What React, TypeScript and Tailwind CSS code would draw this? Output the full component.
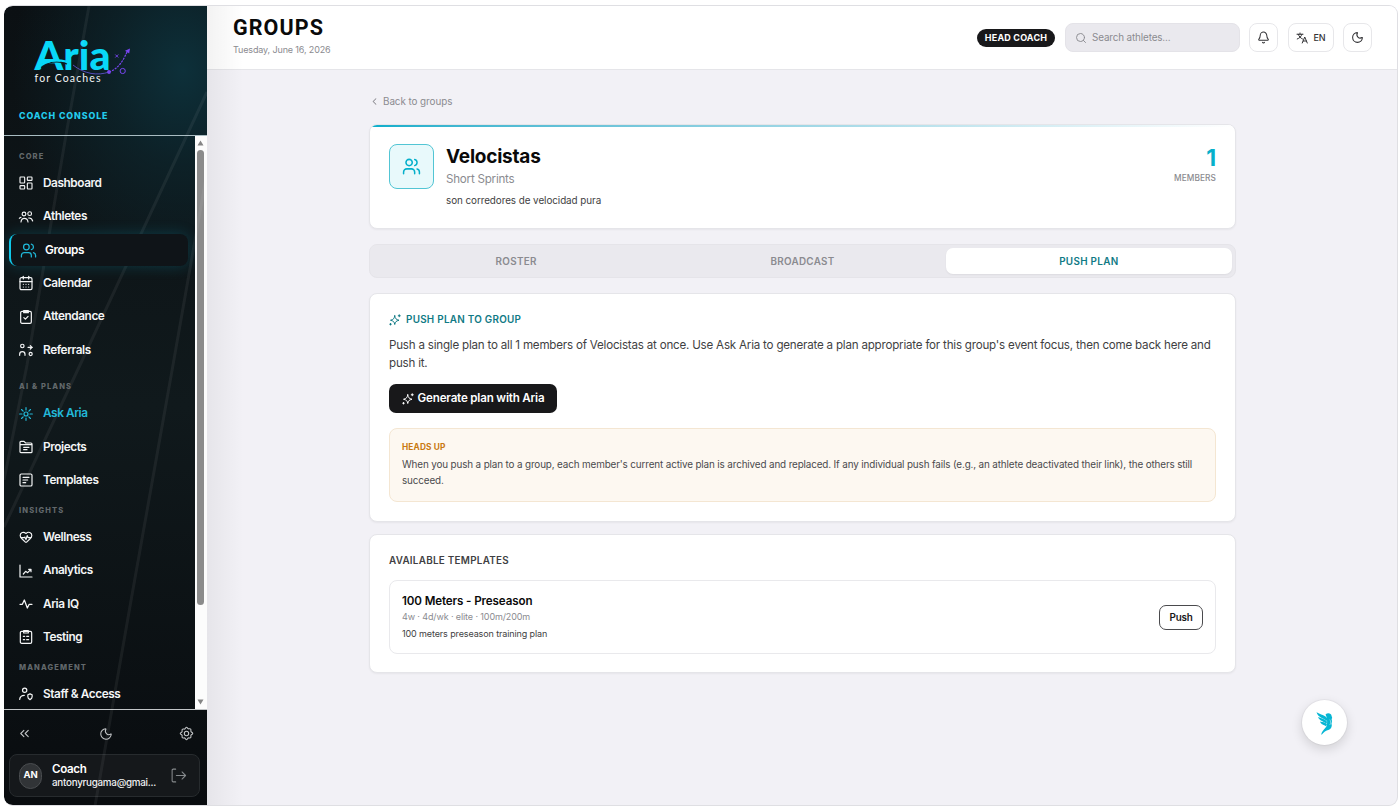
import type { ReactNode } from "react";
import {
  Bell,
  CalendarDays,
  ChevronLeft,
  ChevronsLeft,
  HeartPulse,
  LayoutDashboard,
  Moon,
  Search,
  Users,
} from "lucide-react";

interface NavItem {
  label: string;
  icon: ReactNode;
  tone?: "active" | "accent";
}

interface NavSection {
  title: string;
  gap: string;
  items: NavItem[];
}

function Glyph({ children, size = 16, sw = 1.6 }: { children: ReactNode; size?: number; sw?: number }) {
  return (
    <svg width={size} height={size} viewBox="0 0 24 24" fill="none" stroke="currentColor" strokeWidth={sw} strokeLinecap="round" strokeLinejoin="round">
      {children}
    </svg>
  );
}

const Sparkle = ({ size = 12 }: { size?: number }) => (
  <Glyph size={size} sw={2}>
    <path d="M11.5 3.500c1 6 2.500 7.500 8.500 9-6 1.500-7.500 3-8.500 8.500-1-5.500-2.500-7-8.500-8.500 6-1.500 7.500-3 8.500-9z" />
    <path d="M20.500 1.500v4M18.500 3.500h4M3 19v3M1.500 20.500h3" />
  </Glyph>
);

const LogOutIcon = () => (
  <Glyph size={17} sw={1.5}>
    <path d="M8 3H4.500A1.500 1.500 0 0 0 3 4.500v15A1.500 1.500 0 0 0 4.500 21H8" />
    <path d="M9 12h13M17 7l5 5-5 5" />
  </Glyph>
);

const GearIcon = () => (
  <Glyph size={15} sw={1.7}>
    <path d="M12 2c1.300 0 1.800 2 2.900 2.500s2.800-.6 3.800.4-.1 2.700.4 3.800S22 10.700 22 12s-2.400 1.800-2.900 2.900.6 2.800-.4 3.800-2.700-.1-3.800.4S13.300 22 12 22s-1.800-2.400-2.900-2.900-2.800.6-3.800-.4.1-2.700-.4-3.800S2 13.300 2 12s2.400-1.800 2.900-2.900-.6-2.800.4-3.800 2.700.1 3.800-.4S10.700 2 12 2z" />
    <circle cx="12" cy="12" r="3.500" />
  </Glyph>
);

const SECTIONS: NavSection[] = [
  {
    title: "CORE",
    gap: "mt-[11px]",
    items: [
      { label: "Dashboard", icon: <LayoutDashboard size={16} strokeWidth={1.7} /> },
      {
        label: "Athletes",
        icon: (
          <Glyph sw={1.7}>
            <circle cx="9" cy="7.500" r="2.800" />
            <circle cx="17.500" cy="7" r="2.800" />
            <path d="M4.500 19.500c.4-3.600 2.200-5.500 5-5.500s5.100 2 5.500 5.500M16 13.500c3-.3 5.200 1.500 6 4.500M2 14l2.500-1.500" />
          </Glyph>
        ),
      },
      { label: "Groups", icon: <Users size={17} strokeWidth={1.8} />, tone: "active" },
      { label: "Calendar", icon: <CalendarDays size={16} strokeWidth={1.8} /> },
      {
        label: "Attendance",
        icon: (
          <Glyph sw={1.8}>
            <rect x="4" y="3.500" width="16" height="18" rx="2" />
            <path d="M8.500 2.500h7v3h-7zM8.800 13l2.300 2.300 4-4.300" />
          </Glyph>
        ),
      },
      {
        label: "Referrals",
        icon: (
          <Glyph sw={1.8}>
            <circle cx="6.500" cy="6" r="2.600" />
            <path d="M2.500 20v-1.500c0-2.300 1.500-4 4-4s4 1.700 4 4V20M15 8h6.500M18.500 5.500L21 8l-2.500 2.500" />
            <circle cx="19" cy="18" r="2.300" />
          </Glyph>
        ),
      },
    ],
  },
  {
    title: "AI & PLANS",
    gap: "mt-[10px]",
    items: [
      {
        label: "Ask Aria",
        tone: "accent",
        icon: (
          <Glyph sw={1.8}>
            <circle cx="12" cy="12" r="3" />
            <path d="M12 2.500v3.500M12 18v3.500M2.500 12H6M18 12h3.500M5.300 5.300l2.400 2.400M16.300 16.300l2.400 2.400M5.300 18.700l2.400-2.400M16.300 7.700l2.400-2.400" />
          </Glyph>
        ),
      },
      {
        label: "Projects",
        icon: (
          <Glyph sw={1.8}>
            <path d="M3 19V5a1.500 1.500 0 0 1 1.500-1.500H9L11.500 6H19.500A1.500 1.500 0 0 1 21 7.500V19a1.500 1.500 0 0 1-1.500 1.500h-15A1.500 1.500 0 0 1 3 19zM3 8.500h18M8.500 12.500h8M8.500 16h5" />
          </Glyph>
        ),
      },
      {
        label: "Templates",
        icon: (
          <Glyph sw={1.8}>
            <rect x="3" y="3" width="18" height="18" rx="2" />
            <path d="M7.500 8h9M7.500 12h7M7.500 16h4" />
          </Glyph>
        ),
      },
    ],
  },
  {
    title: "INSIGHTS",
    gap: "mt-[3.5px]",
    items: [
      { label: "Wellness", icon: <HeartPulse size={14} strokeWidth={2} /> },
      {
        label: "Analytics",
        icon: (
          <Glyph sw={1.8}>
            <path d="M3 3v18h18M8 16.500l3.500-4 3 2 4.500-4.500M16 9.500h3.500V13" />
          </Glyph>
        ),
      },
      {
        label: "Aria IQ",
        icon: (
          <Glyph sw={1.9}>
            <path d="M3 12.500h3.500L9.500 6l4.500 12 2.800-5.500H21" />
          </Glyph>
        ),
      },
      {
        label: "Testing",
        icon: (
          <Glyph sw={1.8}>
            <rect x="3.500" y="3.500" width="17" height="18" rx="2" />
            <path d="M8.500 2.500h7v3.500h-7zM8 11h2M13 11h3M8 16h2M13 16h3" />
          </Glyph>
        ),
      },
    ],
  },
  {
    title: "MANAGEMENT",
    gap: "mt-[3.3px]",
    items: [
      {
        label: "Staff & Access",
        icon: (
          <Glyph sw={1.8}>
            <circle cx="10" cy="6.500" r="3.200" />
            <path d="M2.500 20c.5-4 3-6 7-6M18 11.800l3.200 1.300v3.200c0 2-1.200 3.300-3.200 4.200-2-.9-3.200-2.200-3.200-4.200v-3.200z" />
          </Glyph>
        ),
      },
    ],
  },
];

function Logo() {
  return (
    <svg className="mt-[31px] ml-[26px] block overflow-visible" width="106" height="48" viewBox="30 37 106 48" fill="none">
      <text x="34.5" y="70" textLength="76" lengthAdjust="spacingAndGlyphs" className="font-['Lato',sans-serif] text-[39px] font-black" fill="#08d8f8">Aria</text>
      <path d="M41 67.500C49 61.500 58 60.500 67 64" stroke="#0b1c22" strokeWidth="1.300" />
      <path d="M36 69.500C44 61 54 58.500 66 61.500" stroke="#08d8f8" strokeWidth="2.200" />
      <path d="M73 65C84 74 98 76 109 72" stroke="#5b50c9" strokeWidth="0.900" />
      <path d="M109 72C118 69 123 61 127 52" stroke="#7845f0" strokeWidth="1.200" strokeDasharray="2.200 1" />
      <path d="M130 48.500l-5 2.300 4.200 2.800z" fill="#7845f0" />
      <circle cx="109" cy="72" r="1.900" fill="#7845f0" />
      <circle cx="122.700" cy="71" r="2.600" stroke="#7845f0" strokeWidth="1" />
      <path d="M115.300 54.500l3 3M118.300 54.500l-3 3" stroke="#7845f0" strokeWidth="0.900" />
      <text x="34.500" y="81.500" textLength="66" className="font-['Lato',sans-serif] text-[10.5px]" fill="#f2f5f6">for Coaches</text>
    </svg>
  );
}

function Bird() {
  return (
    <svg width="18" height="24" viewBox="0 0 18 24" fill="#06b6d4">
      <path d="M0.500 1.200C4.500 3.800 9.500 3.800 11.700 8L11 10C7 6.700 2.200 6.500 0.500 1.200z" />
      <path d="M2 5.900C6 7.500 9 7.700 11 10.700l-.4 2C8 9.900 3.800 10.500 2 5.900z" />
      <path d="M4 10.400c3.200.7 5 .6 7 2.900l-1 1.900c-2-1.700-4.600-1.200-6-4.800z" />
      <path d="M9.500 3.500C11.500 1.600 15.300 2 15.600 5l.6 2-.6 1c.6 2.200.4 3.300-.1 4.500.9 2.700-.2 5.200-2.500 6.200-3.500 1-4.800 2.200-7.600 5.300-.4-2 1.500-4.500 3.600-6.700 2.200-2.400 2.100-4.200 2.100-6.900-.1-2.200-.3-4.700-1.600-6.900z" />
      <path d="M13.800 8.500c1.100 1.700 1.100 3.600 0 5.500" stroke="#fff" strokeWidth="0.450" fill="none" />
    </svg>
  );
}

function NavRow({ item }: { item: NavItem }) {
  if (item.tone === "active") {
    return (
      <div className="flex h-[33.4px] items-center">
        <div className="ml-[5px] flex h-8 w-[179px] items-center gap-[8px] rounded-lg border-l-2 border-[#10c8ea] bg-[#0f1418] pl-[9px] shadow-[0_0_14px_rgba(16,150,180,0.28)]">
          <span className="flex w-[17px] justify-center text-[#1fb6d6]">{item.icon}</span>
          <span className="text-[11.8px] font-semibold tracking-[-0.035em] text-white">{item.label}</span>
        </div>
      </div>
    );
  }
  return (
    <div className={`flex h-[33.4px] items-center gap-[9px] pl-[14px] ${item.tone === "accent" ? "text-[#22b8d8]" : "text-[#f4f5f6]"}`}>
      <span className="mb-px flex w-4 justify-center">{item.icon}</span>
      <span className="text-[11.8px] font-semibold tracking-[-0.035em] whitespace-nowrap">{item.label}</span>
    </div>
  );
}

function Sidebar() {
  return (
    <aside className="relative z-10 flex w-[203px] shrink-0 flex-col overflow-hidden rounded-l-lg bg-[radial-gradient(ellipse_170px_210px_at_88%_8%,#0d303a_0%,rgba(13,40,48,0.65)_45%,transparent_100%),linear-gradient(180deg,#0b1013_0%,#10191c_50%,#090c0f_100%)]">
      <svg className="pointer-events-none absolute inset-0" width="203" height="800" viewBox="4 6 203 800" fill="none" stroke="#ffffff" strokeOpacity="0.06" strokeWidth="3">
        <path d="M89 6L66 135L27 365L4 480" />
        <path d="M207 92L187 135L80 365L4 527" />
        <path d="M207 172L173 365L132 595L95 806" />
      </svg>
      <div className="h-[130px] shrink-0 border-b border-[#a9bcc2]">
        <Logo />
        <div className="mt-[24px] ml-[15px] text-[8.8px] leading-[13px] font-extrabold tracking-[0.105em] text-[#22cdee]">COACH CONSOLE</div>
      </div>
      <div className="flex h-[574px] shrink-0 border-b border-[#c3c6c8]">
        <nav className="relative min-w-0 flex-1 overflow-hidden">
          {SECTIONS.map(s => (
            <div key={s.title} className={s.gap}>
              <div className="h-5 pl-[15px] text-[7.5px] leading-[20px] font-extrabold tracking-[0.15em] text-[#62686b]">{s.title}</div>
              {s.items.map(item => <NavRow key={item.label} item={item} />)}
            </div>
          ))}
        </nav>
        <div className="flex w-[12.5px] flex-col items-center justify-between bg-[#fcfcfc] py-[4px]">
          <div className="flex flex-col items-center gap-[4px]">
            <svg width="7" height="6" viewBox="0 0 7 6"><path d="M3.500 0.500L6.500 5.500h-6z" fill="#858585" /></svg>
            <div className="h-[455px] w-[7px] rounded-full bg-[#8b8b8b]" />
          </div>
          <svg width="7" height="6" viewBox="0 0 7 6"><path d="M3.500 5.500L6.500 0.500h-6z" fill="#858585" /></svg>
        </div>
      </div>
      <div className="flex h-[44px] shrink-0 items-center justify-between pt-[3px] pr-[13px] pl-[13px] text-[#c3c6c8]">
        <ChevronsLeft size={15} strokeWidth={1.7} />
        <Moon size={14} strokeWidth={1.8} />
        <GearIcon />
      </div>
      <div className="mr-[7px] ml-[5px] flex h-[43px] shrink-0 items-center rounded-lg border border-[#272b2e] bg-[#15181b] pr-[12px] pl-[9px]">
        <div className="flex h-[26px] w-[23px] shrink-0 items-center justify-center rounded-full border border-[#4a4d50] bg-[#313437] text-[9.5px] font-bold tracking-[-0.02em] text-white">AN</div>
        <div className="ml-[10px] min-w-0 flex-1">
          <div className="text-[11.6px] leading-[14px] font-semibold tracking-[-0.03em] text-white">Coach</div>
          <div className="text-[9.8px] leading-[14px] font-medium tracking-[-0.025em] whitespace-nowrap text-[#f0f1f2]">antonyrugama@gmai...</div>
        </div>
        <span className="text-[#85898c]"><LogOutIcon /></span>
      </div>
    </aside>
  );
}

function Header() {
  return (
    <header className="flex h-16 shrink-0 items-center justify-between border-b border-[#e5e5e9] bg-white pr-[25px] pl-[26px]">
      <div className="-mt-[2px]">
        <h1 className="font-['Roboto',sans-serif] text-[21.5px] leading-[24px] font-bold tracking-[0.05em] text-[#0a0a0a]">GROUPS</h1>
        <p className="mt-[3px] text-[9px] leading-[14px] tracking-[-0.015em] text-[#8b8b90]">Tuesday, June 16, 2026</p>
      </div>
      <div className="flex items-center">
        <span className="flex h-[18px] w-[78px] items-center justify-center rounded-full bg-[#18181a] text-[9px] font-bold tracking-[0.02em] whitespace-nowrap text-white">HEAD COACH</span>
        <div className="ml-[10px] flex h-[29px] w-[175px] items-center gap-[5px] rounded-lg border border-[#e4e3e8] bg-[#eae9ee] pl-[9px] text-[#8b8b90]">
          <Search size={12} strokeWidth={1.9} />
          <span className="text-[9.9px] tracking-[-0.014em]">Search athletes...</span>
        </div>
        <button className="ml-[9px] flex h-[29px] w-[29px] items-center justify-center rounded-lg border border-[#e7e7ea] text-[#333336]">
          <Bell size={13} strokeWidth={1.9} />
        </button>
        <button className="ml-[10px] flex h-[29px] w-[46px] items-center justify-center gap-[5px] rounded-lg border border-[#e7e7ea] text-[#333336]">
          <Glyph size={12} sw={2}>
            <path d="M2 4.500h12M8 2v2.500M4.500 4.500C6 9 9 12 13 14M12 4.500C10.500 9 7 12.500 2.500 14M12.500 22l5-12 5 12M14.300 18h6.400" />
          </Glyph>
          <span className="text-[9px] font-medium">EN</span>
        </button>
        <button className="ml-[9px] flex h-[29px] w-[29px] items-center justify-center rounded-lg border border-[#e7e7ea] text-[#333336]">
          <Moon size={13} strokeWidth={2} />
        </button>
      </div>
    </header>
  );
}

const TABS = ["ROSTER", "BROADCAST", "PUSH PLAN"];

export default function App() {
  return (
    <div className="h-[807px] w-[1400px] overflow-hidden bg-white pt-[5px] pl-[4px] font-[Inter,sans-serif] antialiased">
      <div className="flex h-[801px] w-[1394px] overflow-hidden rounded-[9px] border-y border-r border-[#dfdfe3] bg-[#f2f1f6]">
        <Sidebar />
        <div className="relative flex min-w-0 flex-1 flex-col">
          <Header />
          <div className="pointer-events-none absolute inset-y-0 left-0 w-9 bg-gradient-to-r from-black/5 to-transparent" />
          <main className="w-[1029px] pl-[162px] tracking-[-0.014em]">
            <div className="mt-[24px] flex h-[14px] items-center gap-[3px] text-[#8b8b90]">
              <ChevronLeft size={11} strokeWidth={2.2} />
              <span className="text-[9.9px] tracking-[-0.007em]">Back to groups</span>
            </div>

            <section className="mt-[16px] h-[105px] overflow-hidden rounded-lg border border-[#e5e5e9] bg-white shadow-[0_1px_2px_rgba(0,0,0,0.05)]">
              <div className="h-[2px] bg-gradient-to-r from-[#06aecb] to-white" />
              <div className="flex justify-between px-[19px] pt-[17px]">
                <div className="flex gap-[12px]">
                  <div className="flex h-[45px] w-[45px] items-center justify-center rounded-lg border border-[#52c5d4] bg-[#e8f9fb] text-[#06b0cb]">
                    <Users size={19} strokeWidth={1.9} />
                  </div>
                  <div>
                    <h2 className="text-[19px] leading-[26px] font-bold tracking-[-0.012em] text-[#0a0a0a]">Velocistas</h2>
                    <p className="mt-[1px] text-[11.6px] leading-[16px] text-[#8b8b90]">Short Sprints</p>
                    <p className="mt-[6px] text-[9.9px] leading-[14px] tracking-[-0.007em] text-[#3f3f43]">son corredores de velocidad pura</p>
                  </div>
                </div>
                <div className="text-right">
                  <div className="text-[23px] leading-[28px] font-bold text-[#06b0cb]">1</div>
                  <div className="text-[8.3px] leading-[12px] font-medium tracking-[0.01em] text-[#8b8b90]">MEMBERS</div>
                </div>
              </div>
            </section>

            <div className="mt-[15px] flex h-[34px] rounded-lg border border-[#e5e4e9] bg-[#eae9ee] p-[3px]">
              {TABS.map((t, i) => (
                <button key={t} className={`flex-1 rounded-[7px] text-[9.9px] font-semibold tracking-[0.03em] ${i === 2 ? "bg-white text-[#107a85] shadow-[0_1px_2px_rgba(0,0,0,0.06)]" : "text-[#8b8b90]"}`}>{t}</button>
              ))}
            </div>

            <section className="mt-[15px] h-[229px] rounded-lg border border-[#e5e5e9] bg-white px-[19px] pt-[18px] shadow-[0_1px_2px_rgba(0,0,0,0.05)]">
              <div className="flex h-[15px] items-center gap-[5px] text-[#107a85]">
                <Sparkle />
                <span className="text-[9.9px] font-semibold tracking-[0.027em]">PUSH PLAN TO GROUP</span>
              </div>
              <p className="mt-[9px] text-[11.6px] leading-[18px] tracking-[-0.018em] text-[#3f3f43]">
                Push a single plan to all 1 members of Velocistas at once. Use Ask Aria to generate a plan appropriate for this group's event focus, then come back here and push it.
              </p>
              <button className="mt-[12px] flex h-[29px] w-[168px] items-center justify-center gap-[4px] rounded-[7px] bg-[#18181a] text-white">
                <Sparkle />
                <span className="text-[11.6px] font-semibold tracking-[-0.016em] whitespace-nowrap">Generate plan with Aria</span>
              </button>
              <div className="mt-[15px] h-[74px] rounded-lg border border-[#f4e6d2] bg-[#fdf8f1] px-[12px] pt-[12px]">
                <div className="text-[8.3px] leading-[13px] font-bold tracking-[0.02em] text-[#c97a12]">HEADS UP</div>
                <p className="mt-[2px] text-[9.9px] leading-[16px] tracking-[-0.014em] text-[#4a4a4d]">
                  When you push a plan to a group, each member's current active plan is archived and replaced. If any individual push fails (e.g., an athlete deactivated their link), the others still succeed.
                </p>
              </div>
            </section>

            <section className="mt-[12px] h-[139px] rounded-lg border border-[#e5e5e9] bg-white px-[19px] pt-[18px] shadow-[0_1px_2px_rgba(0,0,0,0.05)]">
              <h3 className="text-[9.9px] leading-[15px] font-semibold tracking-[0.027em] text-[#3f3f43]">AVAILABLE TEMPLATES</h3>
              <div className="mt-[12px] flex h-[74px] items-center justify-between rounded-lg border border-[#e9e9ec] px-[12px]">
                <div>
                  <div className="text-[11.6px] leading-[17px] font-semibold tracking-[-0.01em] text-[#0a0a0a]">100 Meters - Preseason</div>
                  <div className="text-[9px] leading-[14px] tracking-[-0.013em] text-[#8b8b90]">4w · 4d/wk · elite · 100m/200m</div>
                  <div className="mt-[2px] text-[9px] leading-[15px] tracking-[-0.013em] text-[#3f3f43]">100 meters preseason training plan</div>
                </div>
                <button className="h-[25px] w-[44px] rounded-[7px] border border-[#4a4a4d] text-[9.9px] font-semibold text-[#18181a]">Push</button>
              </div>
            </section>
          </main>
          <button className="absolute right-[50px] bottom-[60px] flex h-[45px] w-[45px] items-center justify-center rounded-full bg-white shadow-[0_0_0_1px_rgba(0,0,0,0.04),0_4px_12px_rgba(0,0,0,0.14)]">
            <Bird />
          </button>
        </div>
      </div>
    </div>
  );
}
